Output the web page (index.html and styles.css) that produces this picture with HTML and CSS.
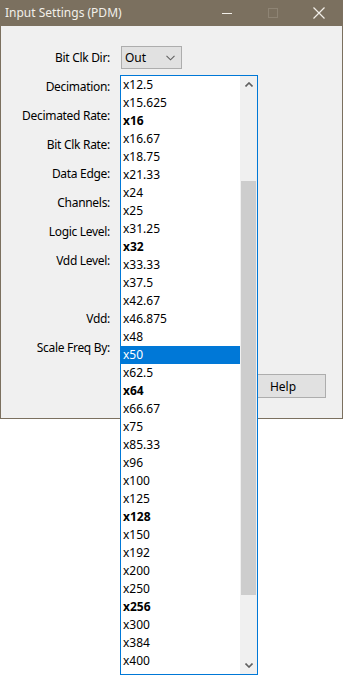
FILE: index.html
```html
<!DOCTYPE html>
<html lang="en">
<head>
  <meta charset="UTF-8">
  <meta name="viewport" content="width=device-width, initial-scale=1.0">
  <title>Input Settings (PDM)</title>
  <link rel="stylesheet" href="styles.css">
</head>
<body>
  <div class="window">
    <div class="titlebar">
      <span class="title">Input Settings (PDM)</span>
      <div class="caption-buttons">
        <span class="caption-btn">
          <svg width="10" height="10" viewBox="0 0 10 10"><path d="M0 5.5h10" stroke="#f2efe9" stroke-width="1"/></svg>
        </span>
        <span class="caption-btn">
          <svg width="10" height="10" viewBox="0 0 10 10"><rect x="0.5" y="0.5" width="9" height="9" fill="none" stroke="#8e8474" stroke-width="1"/></svg>
        </span>
        <span class="caption-btn">
          <svg width="12" height="12" viewBox="0 0 12 12"><path d="M0.5 0.5l11 11M11.5 0.5l-11 11" stroke="#f2efe9" stroke-width="1.2"/></svg>
        </span>
      </div>
    </div>

    <div class="client">
      <div class="form">
        <label>Bit Clk Dir:</label>
        <div class="field">
          <div class="combo">
            <span>Out</span>
            <svg width="9" height="6" viewBox="0 0 9 6"><path d="M0.5 0.8l4 4 4-4" fill="none" stroke="#606060" stroke-width="1.1"/></svg>
          </div>
        </div>
        <label>Decimation:</label><div class="field"></div>
        <label>Decimated Rate:</label><div class="field"></div>
        <label>Bit Clk Rate:</label><div class="field"></div>
        <label>Data Edge:</label><div class="field"></div>
        <label>Channels:</label><div class="field"></div>
        <label>Logic Level:</label><div class="field"></div>
        <label>Vdd Level:</label><div class="field"></div>
        <label></label><div class="field"></div>
        <label>Vdd:</label><div class="field"></div>
        <label>Scale Freq By:</label><div class="field"></div>
      </div>

      <div class="buttons">
        <button class="btn">Help</button>
      </div>

      <!-- open decimation dropdown -->
      <div class="dropdown">
        <ul class="options">
          <li>x12.5</li>
          <li>x15.625</li>
          <li class="bold">x16</li>
          <li>x16.67</li>
          <li>x18.75</li>
          <li>x21.33</li>
          <li>x24</li>
          <li>x25</li>
          <li>x31.25</li>
          <li class="bold">x32</li>
          <li>x33.33</li>
          <li>x37.5</li>
          <li>x42.67</li>
          <li>x46.875</li>
          <li>x48</li>
          <li class="selected">x50</li>
          <li>x62.5</li>
          <li class="bold">x64</li>
          <li>x66.67</li>
          <li>x75</li>
          <li>x85.33</li>
          <li>x96</li>
          <li>x100</li>
          <li>x125</li>
          <li class="bold">x128</li>
          <li>x150</li>
          <li>x192</li>
          <li>x200</li>
          <li>x250</li>
          <li class="bold">x256</li>
          <li>x300</li>
          <li>x384</li>
          <li>x400</li>
        </ul>
        <div class="scrollbar">
          <div class="arrow">
            <svg width="8" height="5" viewBox="0 0 8 5"><path d="M0.5 4.5l3.5-3.5 3.5 3.5" fill="none" stroke="#606060" stroke-width="1.6"/></svg>
          </div>
          <div class="track">
            <div class="thumb"></div>
          </div>
          <div class="arrow">
            <svg width="8" height="5" viewBox="0 0 8 5"><path d="M0.5 0.5l3.5 3.5 3.5-3.5" fill="none" stroke="#606060" stroke-width="1.6"/></svg>
          </div>
        </div>
      </div>
    </div>
  </div>
</body>
</html>
```

FILE: styles.css
```css
body {
  margin: 0;
  font-family: "Noto Sans", "Open Sans", sans-serif;
  font-size: 12px;
  color: #000;
  background-color: #fff;
  width: 343px;
  height: 675px;
  overflow: hidden;
}

.window {
  width: 343px;
  box-sizing: border-box;
  border: 1px solid #7b705f;
  border-top: none;
  background-color: #f0f0f0;
}

.titlebar {
  height: 26px;
  display: flex;
  align-items: center;
  background-color: #7b705f;
}

.title {
  padding-left: 4px;
  color: #f2efe9;
  font-size: 12px;
  line-height: 26px;
}

.caption-buttons {
  margin-left: auto;
  display: flex;
  height: 100%;
}

.caption-btn {
  width: 46px;
  display: flex;
  align-items: center;
  justify-content: center;
}

.client {
  position: relative;
  height: 392px;
  box-sizing: border-box;
  padding: 17px 16px 0 0;
}

.form {
  display: grid;
  grid-template-columns: 109px 1fr;
  grid-auto-rows: 29px;
  column-gap: 11px;
}

.form label {
  display: flex;
  align-items: center;
  justify-content: flex-end;
  letter-spacing: -0.3px;
}

.field {
  display: flex;
  align-items: center;
}

.combo {
  width: 61px;
  height: 23px;
  box-sizing: border-box;
  border: 1px solid #adadad;
  background-color: #e1e1e1;
  display: flex;
  align-items: center;
  justify-content: space-between;
  padding: 0 6px 0 3px;
}

.buttons {
  display: flex;
  justify-content: flex-end;
  margin-top: 12px;
}

.btn {
  width: 86px;
  height: 24px;
  border: 1px solid #adadad;
  background-color: #e1e1e1;
  font-family: inherit;
  font-size: 12px;
  color: #000;
  padding: 0;
}

.dropdown {
  position: absolute;
  left: 119px;
  top: 49px;
  width: 138px;
  height: 600px;
  box-sizing: border-box;
  border: 1px solid #0078d7;
  background-color: #fff;
  display: flex;
}

.options {
  list-style: none;
  margin: 0;
  padding: 0;
  width: 119px;
  overflow: hidden;
}

.options li {
  height: 18px;
  line-height: 18px;
  padding-left: 2px;
}

.options .bold {
  font-weight: bold;
}

.options .selected {
  background-color: #0078d7;
  color: #fff;
}

.scrollbar {
  width: 17px;
  background-color: #f0f0f0;
  display: flex;
  flex-direction: column;
}

.arrow {
  height: 17px;
  display: flex;
  align-items: center;
  justify-content: center;
}

.track {
  flex: 1;
  padding: 88px 1px 62px 1px;
}

.thumb {
  height: 100%;
  background-color: #cdcdcd;
}
```
